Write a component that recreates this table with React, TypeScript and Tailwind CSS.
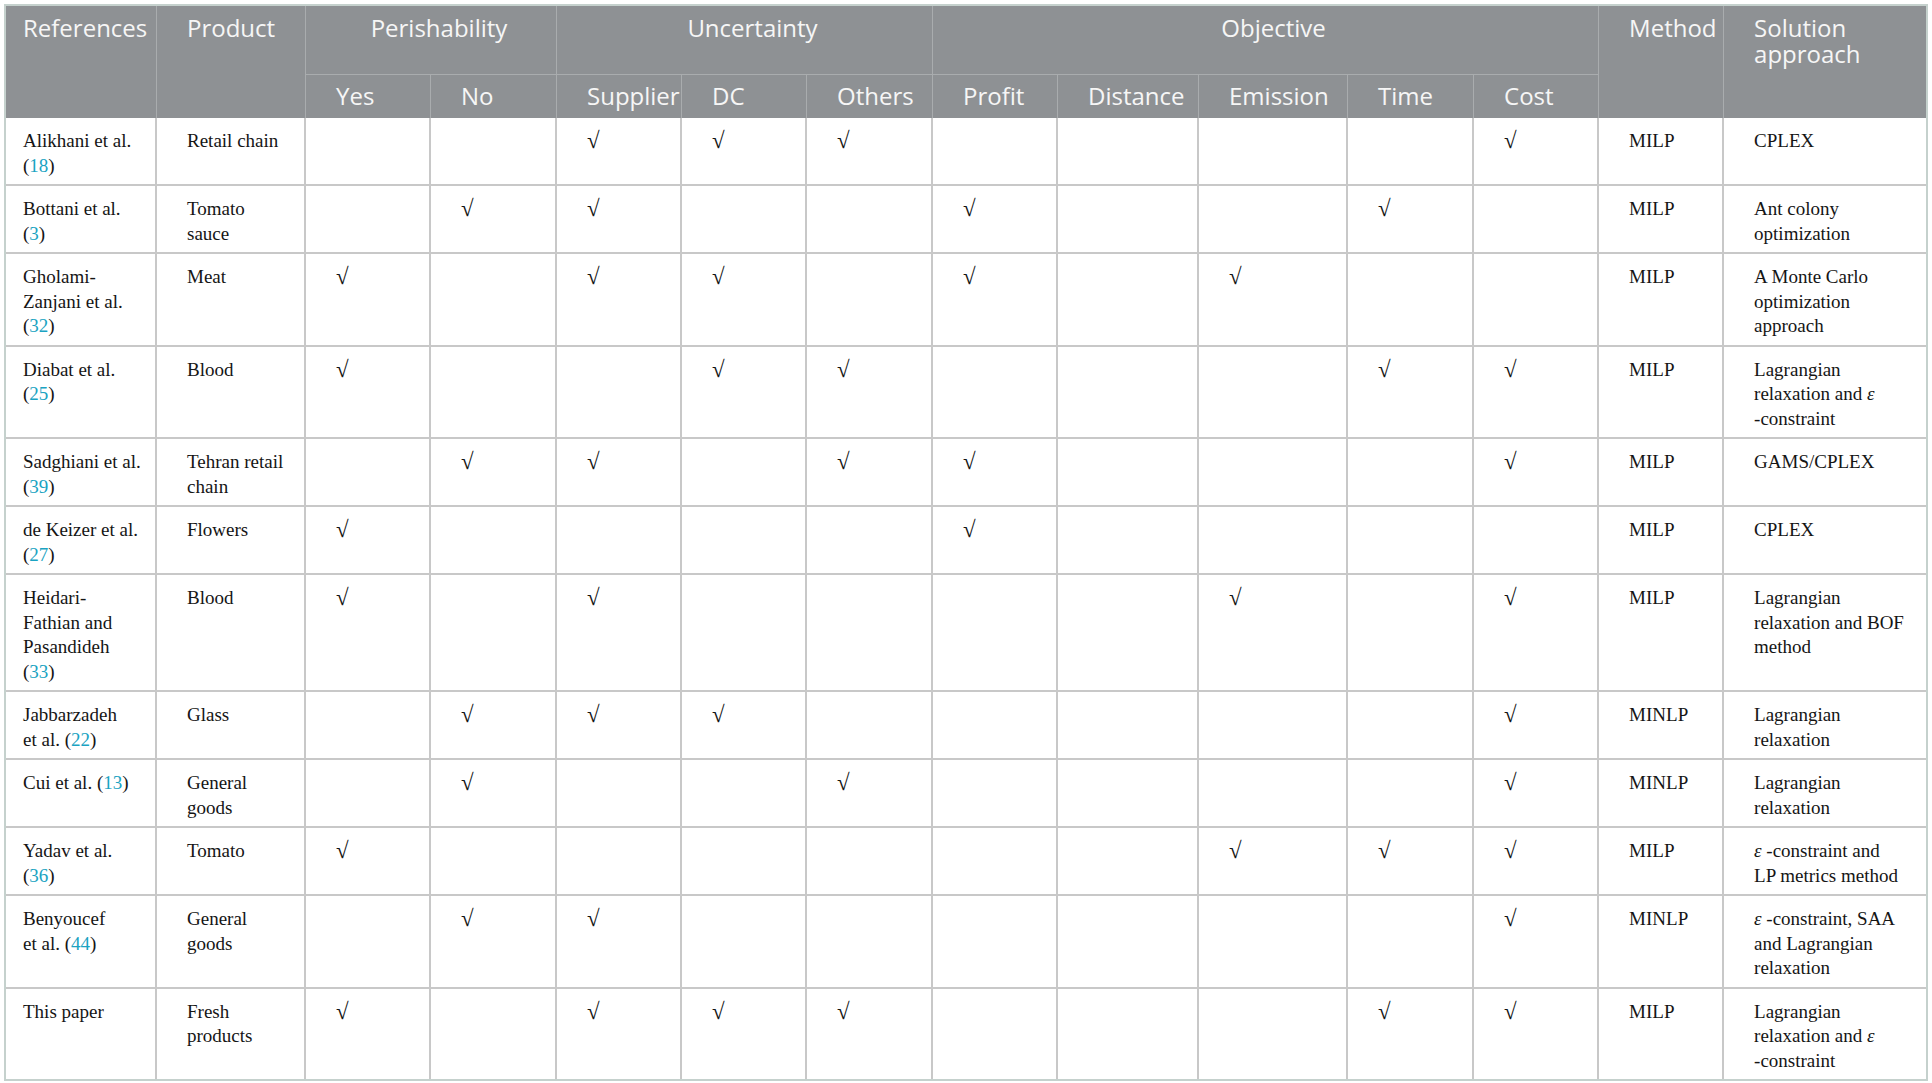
import type { ReactNode } from 'react';
import clsx from 'clsx';

type Check = 'yes' | 'no' | 'supplier' | 'dc' | 'others' | 'profit' | 'distance' | 'emission' | 'time' | 'cost';

type Row = {
  ref: ReactNode[];
  product: string[];
  checks: Check[];
  method: string;
  solution: ReactNode[];
};

const checkCols: Check[] = ['yes', 'no', 'supplier', 'dc', 'others', 'profit', 'distance', 'emission', 'time', 'cost'];

function Cite({ n }: { n: number }) {
  return (
    <>
      (<span className="text-[#1aa3c2]">{n}</span>)
    </>
  );
}

const eps = <i>ε</i>;

const rows: Row[] = [
  {
    ref: ['Alikhani et al.', <Cite n={18} />],
    product: ['Retail chain'],
    checks: ['supplier', 'dc', 'others', 'cost'],
    method: 'MILP',
    solution: ['CPLEX'],
  },
  {
    ref: ['Bottani et al.', <Cite n={3} />],
    product: ['Tomato', 'sauce'],
    checks: ['no', 'supplier', 'profit', 'time'],
    method: 'MILP',
    solution: ['Ant colony', 'optimization'],
  },
  {
    ref: ['Gholami-', 'Zanjani et al.', <Cite n={32} />],
    product: ['Meat'],
    checks: ['yes', 'supplier', 'dc', 'profit', 'emission'],
    method: 'MILP',
    solution: ['A Monte Carlo', 'optimization', 'approach'],
  },
  {
    ref: ['Diabat et al.', <Cite n={25} />],
    product: ['Blood'],
    checks: ['yes', 'dc', 'others', 'time', 'cost'],
    method: 'MILP',
    solution: ['Lagrangian', <>relaxation and {eps}</>, '-constraint'],
  },
  {
    ref: ['Sadghiani et al.', <Cite n={39} />],
    product: ['Tehran retail', 'chain'],
    checks: ['no', 'supplier', 'others', 'profit', 'cost'],
    method: 'MILP',
    solution: ['GAMS/CPLEX'],
  },
  {
    ref: ['de Keizer et al.', <Cite n={27} />],
    product: ['Flowers'],
    checks: ['yes', 'profit'],
    method: 'MILP',
    solution: ['CPLEX'],
  },
  {
    ref: ['Heidari-', 'Fathian and', 'Pasandideh', <Cite n={33} />],
    product: ['Blood'],
    checks: ['yes', 'supplier', 'emission', 'cost'],
    method: 'MILP',
    solution: ['Lagrangian', 'relaxation and BOF', 'method'],
  },
  {
    ref: ['Jabbarzadeh', <>et al. <Cite n={22} /></>],
    product: ['Glass'],
    checks: ['no', 'supplier', 'dc', 'cost'],
    method: 'MINLP',
    solution: ['Lagrangian', 'relaxation'],
  },
  {
    ref: [<>Cui et al. <Cite n={13} /></>],
    product: ['General', 'goods'],
    checks: ['no', 'others', 'cost'],
    method: 'MINLP',
    solution: ['Lagrangian', 'relaxation'],
  },
  {
    ref: ['Yadav et al.', <Cite n={36} />],
    product: ['Tomato'],
    checks: ['yes', 'emission', 'time', 'cost'],
    method: 'MILP',
    solution: [<>{eps} -constraint and</>, 'LP metrics method'],
  },
  {
    ref: ['Benyoucef', <>et al. <Cite n={44} /></>],
    product: ['General', 'goods'],
    checks: ['no', 'supplier', 'cost'],
    method: 'MINLP',
    solution: [<>{eps} -constraint, SAA</>, 'and Lagrangian', 'relaxation'],
  },
  {
    ref: ['This paper'],
    product: ['Fresh', 'products'],
    checks: ['yes', 'supplier', 'dc', 'others', 'time', 'cost'],
    method: 'MILP',
    solution: ['Lagrangian', <>relaxation and {eps}</>, '-constraint'],
  },
];

function Lines({ lines }: { lines: ReactNode[] }) {
  return (
    <>
      {lines.map((l, i) => (
        <div key={i} className="whitespace-nowrap">
          {l}
        </div>
      ))}
    </>
  );
}

function Td({ children, last, end, first }: { children?: ReactNode; last?: boolean; end?: boolean; first?: boolean }) {
  return (
    <td
      className={clsx(
        'align-top pt-[11px] pb-[6px] border-[#c8c8c8]',
        first ? 'pl-[17px]' : 'pl-[30px]',
        !end && 'border-r-2',
        !last && 'border-b-2',
      )}
    >
      {children}
    </td>
  );
}

const subHeads = ['Yes', 'No', 'Supplier', 'DC', 'Others', 'Profit', 'Distance', 'Emission', 'Time', 'Cost'];

export default function App() {
  return (
    <div className="min-h-screen bg-white">
      <div className="ml-[4px] mt-[4px] w-fit border-2 border-[#c5d1cd]">
        <table className="table-fixed border-separate border-spacing-0 w-[1920px]">
          <colgroup>
            <col className="w-[151px]" />
            <col className="w-[149px]" />
            <col className="w-[125px]" />
            <col className="w-[126px]" />
            <col className="w-[125px]" />
            <col className="w-[125px]" />
            <col className="w-[126px]" />
            <col className="w-[125px]" />
            <col className="w-[141px]" />
            <col className="w-[149px]" />
            <col className="w-[126px]" />
            <col className="w-[125px]" />
            <col className="w-[125px]" />
            <col className="w-[202px]" />
          </colgroup>
          <thead className="bg-[#8e9194] text-[#f6f6f6] font-['Open_Sans',sans-serif] text-[24px] leading-[26px]">
            <tr className="h-[69px]">
              <th rowSpan={2} className="align-top text-left font-normal pl-[17px] pt-[9px] border-r border-[#a9acae] whitespace-nowrap">
                References
              </th>
              <th rowSpan={2} className="align-top text-left font-normal pl-[30px] pt-[9px] border-r border-[#a9acae]">
                Product
              </th>
              <th colSpan={2} className="align-top text-center font-normal pl-[16px] pt-[9px] border-r border-b border-[#a9acae]">
                Perishability
              </th>
              <th colSpan={3} className="align-top text-center font-normal pl-[16px] pt-[9px] border-r border-b border-[#a9acae]">
                Uncertainty
              </th>
              <th colSpan={5} className="align-top text-center font-normal pl-[16px] pt-[9px] border-r border-b border-[#a9acae]">
                Objective
              </th>
              <th rowSpan={2} className="align-top text-left font-normal pl-[30px] pt-[9px] border-r border-[#a9acae]">
                Method
              </th>
              <th rowSpan={2} className="align-top text-left font-normal pl-[30px] pt-[9px]">
                Solution
                <br />
                approach
              </th>
            </tr>
            <tr className="h-[43px]">
              {subHeads.map((h) => (
                <th key={h} className="align-middle text-left font-normal pl-[30px] pb-[2px] border-r border-[#a9acae] whitespace-nowrap">
                  {h}
                </th>
              ))}
            </tr>
          </thead>
          <tbody className="font-['Liberation_Serif',serif] text-[19px] leading-[24.5px] text-[#151515]">
            {rows.map((r, i) => {
              const last = i === rows.length - 1;
              return (
                <tr key={i}>
                  <Td first last={last}>
                    <Lines lines={r.ref} />
                  </Td>
                  <Td last={last}>
                    <Lines lines={r.product} />
                  </Td>
                  {checkCols.map((c) => (
                    <Td key={c} last={last}>
                      {r.checks.includes(c) ? <span className="text-[23px] leading-[24.5px]">√</span> : null}
                    </Td>
                  ))}
                  <Td last={last}>{r.method}</Td>
                  <Td last={last} end>
                    <Lines lines={r.solution} />
                  </Td>
                </tr>
              );
            })}
          </tbody>
        </table>
      </div>
    </div>
  );
}
